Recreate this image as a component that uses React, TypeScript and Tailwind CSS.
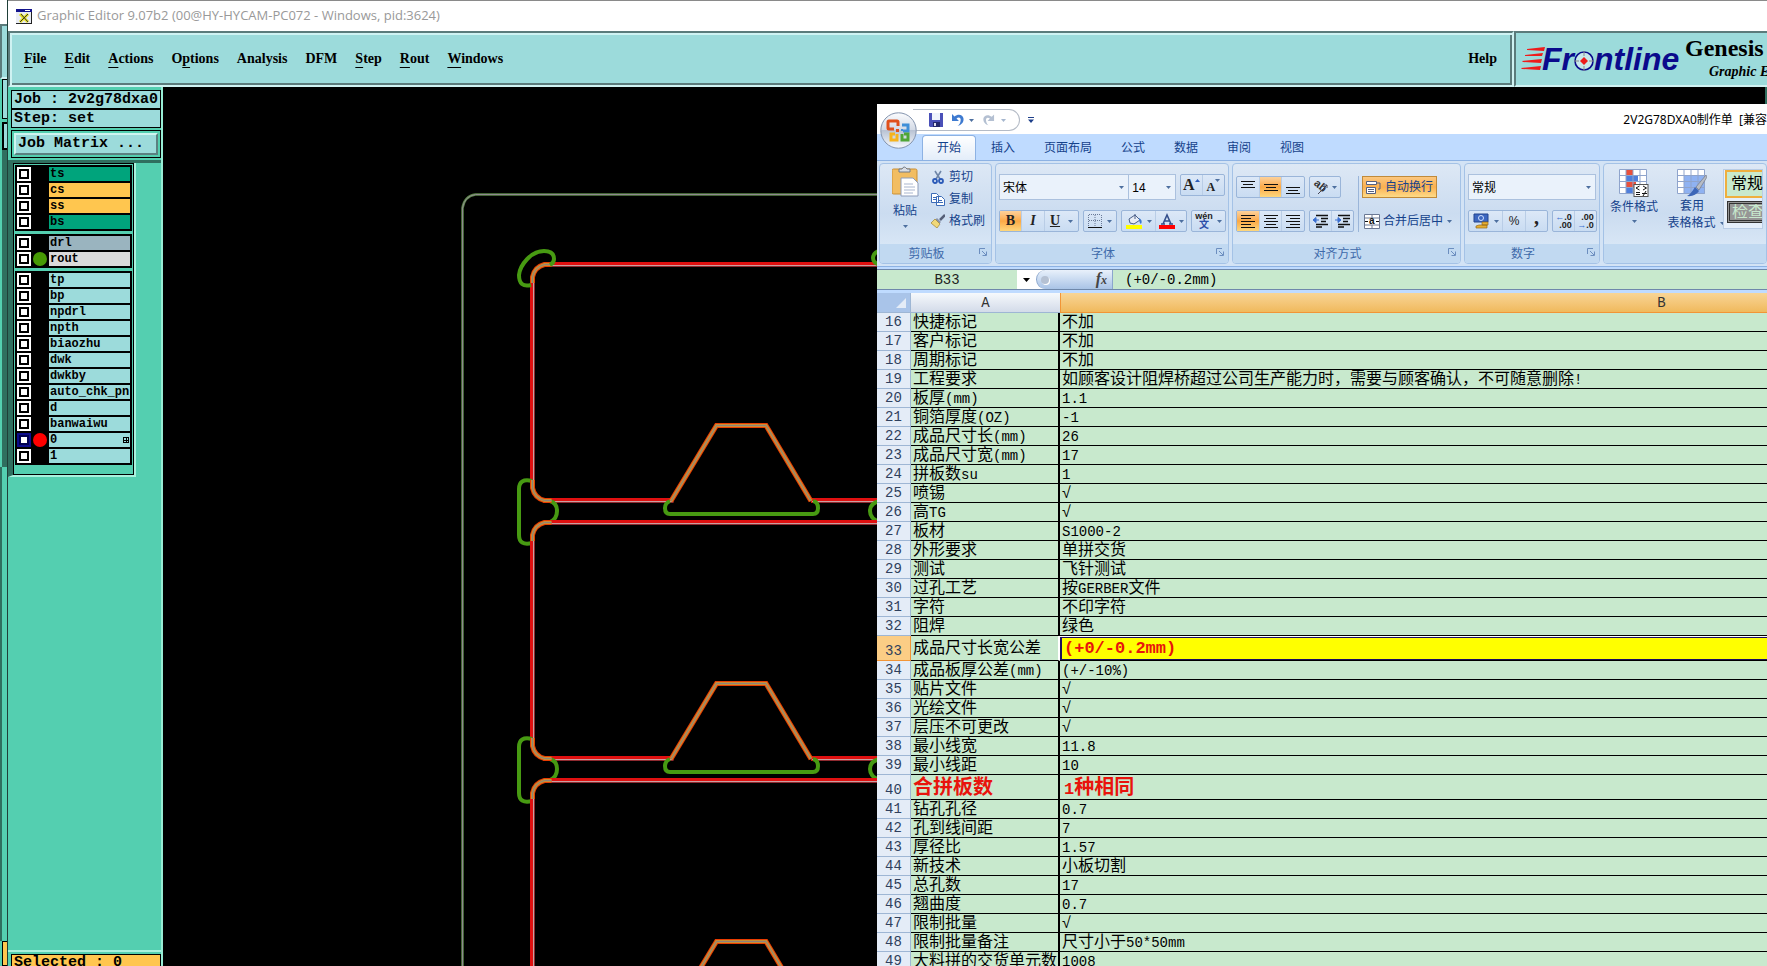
import type { ReactNode } from "react";
import clsx from "clsx";

const layerGroups = [
  [
    { name: "ts", bg: "bg-[#00a47c]" },
    { name: "cs", bg: "bg-[#ffc64f]" },
    { name: "ss", bg: "bg-[#ffc64f]" },
    { name: "bs", bg: "bg-[#00a47c]" },
  ],
  [
    { name: "drl", bg: "bg-[#9ab4bf]" },
    { name: "rout", bg: "bg-[#dadada]", dot: "bg-[#479a04]" },
  ],
  [
    { name: "tp", bg: "bg-[#9cdbdb]" },
    { name: "bp", bg: "bg-[#9cdbdb]" },
    { name: "npdrl", bg: "bg-[#9cdbdb]" },
    { name: "npth", bg: "bg-[#9cdbdb]" },
    { name: "biaozhu", bg: "bg-[#9cdbdb]" },
    { name: "dwk", bg: "bg-[#9cdbdb]" },
    { name: "dwkby", bg: "bg-[#9cdbdb]" },
    { name: "auto_chk_pnl", bg: "bg-[#9cdbdb]" },
    { name: "d", bg: "bg-[#9cdbdb]" },
    { name: "banwaiwu", bg: "bg-[#9cdbdb]" },
    { name: "0", bg: "bg-[#9cdbdb]", dot: "bg-[#ff0000]", active: true },
    { name: "1", bg: "bg-[#9cdbdb]" },
  ],
];

// label, index of the underlined letter (-1 for none)
const menus: [string, number][] = [
  ["File", 0],
  ["Edit", 0],
  ["Actions", 0],
  ["Options", 1],
  ["Analysis", -1],
  ["DFM", -1],
  ["Step", 0],
  ["Rout", 0],
  ["Windows", 0],
];

const rows: [number, string, string][] = [
  [16, "快捷标记", "不加"],
  [17, "客户标记", "不加"],
  [18, "周期标记", "不加"],
  [19, "工程要求", "如顾客设计阻焊桥超过公司生产能力时，需要与顾客确认，不可随意删除!"],
  [20, "板厚(mm)", "1.1"],
  [21, "铜箔厚度(OZ)", "-1"],
  [22, "成品尺寸长(mm)", "26"],
  [23, "成品尺寸宽(mm)", "17"],
  [24, "拼板数su", "1"],
  [25, "喷锡", "√"],
  [26, "高TG", "√"],
  [27, "板材", "S1000-2"],
  [28, "外形要求", "单拼交货"],
  [29, "测试", "飞针测试"],
  [30, "过孔工艺", "按GERBER文件"],
  [31, "字符", "不印字符"],
  [32, "阻焊", "绿色"],
  [33, "成品尺寸长宽公差", "(+0/-0.2mm)"],
  [34, "成品板厚公差(mm)", "(+/-10%)"],
  [35, "贴片文件", "√"],
  [36, "光绘文件", "√"],
  [37, "层压不可更改", "√"],
  [38, "最小线宽", "11.8"],
  [39, "最小线距", "10"],
  [40, "合拼板数", "1种相同"],
  [41, "钻孔孔径", "0.7"],
  [42, "孔到线间距", "7"],
  [43, "厚径比", "1.57"],
  [44, "新技术", "小板切割"],
  [45, "总孔数", "17"],
  [46, "翘曲度", "0.7"],
  [47, "限制批量", "√"],
  [48, "限制批量备注", "尺寸小于50*50mm"],
  [49, "大料拼的交货单元数", "1008"],
];

const tabs = ["开始", "插入", "页面布局", "公式", "数据", "审阅", "视图"];

/* ---------- Genesis window ---------- */

const TitleBar = () => (
  <header className="flex h-[31px] shrink-0 items-center border-t border-[#8a8a8a] bg-white pl-2 font-['Open_Sans',sans-serif] text-[13px] text-[#999]">
    <svg className="mr-[5px]" width="16" height="15" viewBox="0 0 16 15">
      <rect x="0" y="0" width="16" height="15" fill="#222" />
      <rect x="0" y="0" width="15" height="14" fill="#e9ecf4" />
      <rect x="0" y="0" width="16" height="3" fill="#14148c" />
      <rect x="9" y="1" width="5" height="1" fill="#fff" />
      <path d="M4 5l8 8M12 5l-8 8" stroke="#e8e020" strokeWidth="3" />
      <path d="M5 5l7 8M12 5l-8 8" stroke="#333" strokeWidth="1" />
    </svg>
    Graphic Editor 9.07b2 (00@HY-HYCAM-PC072 - Windows, pid:3624)
  </header>
);

const MenuLabel = ({ text, at }: { text: string; at: number }) => (
  <button className="leading-5">
    {at < 0 ? (
      text
    ) : (
      <>
        {text.slice(0, at)}
        <span className="underline decoration-1 underline-offset-4 [text-decoration-skip-ink:none]">{text[at]}</span>
        {text.slice(at + 1)}
      </>
    )}
  </button>
);

const FrontlineLogo = () => (
  <svg className="shrink-0" width="164" height="40" viewBox="0 0 164 40">
    <g fill="#ee1c1c">
      <path d="M6 9l18-2-1 4-17-1z" />
      <path d="M4 15l18-2-1 3-17 0z" />
      <path d="M1 21l20-2-1 4-18-1z" />
      <path d="M0 28l20-2-1 4-18-1z" />
    </g>
    <g fill="#0a0a8c" fontFamily="'Liberation Sans', sans-serif" fontWeight="bold" fontStyle="italic" fontSize="32">
      <text x="21" y="30">Fr</text>
      <text x="73" y="30">ntline</text>
    </g>
    <circle cx="63" cy="21" r="9" fill="#c8e8ea" stroke="#0a0a8c" strokeWidth="1.6" />
    <path d="M63 17l4 4-4 4-4-4z" fill="#ee1c1c" />
    <path d="M63 11v5M63 26v5M53 21h5M68 21h5" stroke="#888" strokeWidth="1" />
  </svg>
);

const MenuBar = () => (
  <div className="flex h-14 shrink-0 bg-[#9cdbdb] font-['Liberation_Serif',serif] text-sm font-bold text-black">
    <nav className="flex min-w-0 flex-1 items-center gap-[18px] border-2 border-t-[#5b7b7b] border-r-[#cff2f2] border-b-[#cff2f2] border-l-[#5b7b7b] pr-[15px] pl-[14px] shadow-[inset_2px_2px_0_#cff2f2,inset_-2px_-2px_0_#5b7b7b]">
      {menus.map(([text, at]) => (
        <MenuLabel key={text} text={text} at={at} />
      ))}
      <button className="ml-auto">Help</button>
    </nav>
    <div className="flex w-[253px] shrink-0 overflow-hidden border-2 border-r-0 border-t-[#5b7b7b] border-b-[#cff2f2] border-l-[#5b7b7b] pl-[5px]">
      <div className="pt-[7px]">
        <FrontlineLogo />
      </div>
      <div className="flex flex-col pt-px whitespace-nowrap">
        <span className="text-2xl leading-7">Genesis</span>
        <span className="pl-6 text-sm leading-5 italic">Graphic Editor</span>
      </div>
    </div>
  </div>
);

const Sidebar = () => (
  <aside className="flex w-[155px] shrink-0 flex-col border-r-2 border-[#97ecd4] bg-[#54cfb0] font-['Liberation_Mono',monospace] font-bold text-black">
    <div className="mt-[3px] ml-[3px] border border-black bg-[#9cdbdb] text-[15px]">
      <p className="h-[19px] overflow-hidden border-b-2 border-black pl-[2px] leading-[18px] whitespace-nowrap">Job : 2v2g78dxa0</p>
      <p className="h-[17px] pl-[2px] leading-[18px]">Step: set</p>
    </div>
    <div className="mt-[2px] ml-[3px] border border-black p-[2px]">
      <button className="block h-[22px] w-full border-2 border-t-[#cff5f0] border-r-[#5b8080] border-b-[#5b8080] border-l-[#cff5f0] bg-[#9cdbdb] pl-[2px] text-left text-[15px] leading-[18px]">
        Job Matrix ...
      </button>
    </div>
    <div className="mt-[2px] h-[3px] bg-[#2f6f5f]" />
    <div className="mr-auto border-r-2 border-b-2 border-l-[5px] border-r-[#a8f2dd] border-b-[#a8f2dd] border-l-[#2f6f5f]">
      <div className="flex flex-col gap-[3px] border border-black p-px pb-[9px]">
        {layerGroups.map((group, i) => (
          <ul key={i} className="border-2 border-y border-black bg-black">
            {group.map((layer) => (
              <li key={layer.name} className="flex h-4 items-center">
                <input
                  type="checkbox"
                  id={"layer-" + layer.name}
                  className={clsx(
                    "size-3.5 shrink-0 appearance-none border-2 bg-white",
                    "active" in layer
                      ? "border-[#0c0c8c] shadow-[inset_0_0_0_2px_#000050]"
                      : "border-white shadow-[inset_0_0_0_2px_black]"
                  )}
                />
                <span className="flex w-[18px] justify-center">
                  {"dot" in layer && <i className={clsx("size-3.5 rounded-full", layer.dot)} />}
                </span>
                <label
                  htmlFor={"layer-" + layer.name}
                  className={clsx("flex h-3.5 w-[81px] items-center justify-between overflow-hidden pl-px text-xs leading-[14px]", layer.bg)}
                >
                  {layer.name}
                  {"active" in layer && (
                    <svg className="mr-px" width="6" height="6" viewBox="0 0 6 6" shapeRendering="crispEdges">
                      <path d="M.5.5h5v5h-5zM3 0v6M0 3h6" fill="none" stroke="#000" />
                    </svg>
                  )}
                </label>
              </li>
            ))}
          </ul>
        ))}
      </div>
    </div>
    <div className="mt-auto h-4 shrink-0 overflow-hidden border-t-2 border-[#a8f2dd] pt-[2px] pl-[3px]">
      <p className="h-5 border border-black bg-[#ffc64f] pl-[2px] text-[15px] leading-4">Selected : 0</p>
    </div>
  </aside>
);

const Track = ({ d }: { d: string }) => (
  <>
    <path d={d} stroke="#e01010" strokeWidth="5" />
    <path d={d} stroke="#8f2a30" strokeWidth="2" transform="translate(1.5 1.5)" />
    <path d={d} stroke="#c9a0a0" strokeWidth="1" transform="translate(1 1)" />
  </>
);

const Bend = ({ d }: { d: string }) => (
  <>
    <path d={d} stroke="#e83c00" strokeWidth="5" />
    <path d={d} stroke="#c99035" strokeWidth="3" />
    <path d={d} stroke="#8c8080" strokeWidth="1" />
  </>
);

const Canvas = () => (
  <svg className="size-full" fill="none">
    <g transform="translate(-163 -87)">
      <path d="M462.5 1000V208q2-12 13-13.500H1000" stroke="#5b8748" strokeWidth="2.500" />
      <path d="M462.5 1000V208q2-12 13-13.500H1000" stroke="#8f8a90" strokeWidth="1" />
      {[0, 258, 516].map((y) => (
        <g key={y} transform={`translate(0 ${y})`}>
          <Track d="M545 264.500H900" />
          <Track d="M532.500 278V488" />
          <Track d="M543 500.500H672" />
          <Track d="M811 500.500H900" />
          <g stroke="#479a12" strokeWidth="4">
            <path d="M670 501q-5 2-5 7 0 6 5 6H813q5 0 5-6 0-6-5-7" />
            <path d="M532 481q-13-3-13 8v46q0 11 13 8" />
            <path d="M550 501q7 2 7 10t-7 11" />
            <path d="M880 501q-10 2-10 10t10 11" />
          </g>
          <Bend d="M671 501L716.500 425.500H766L811 501" />
          <Bend d="M532.500 480v8q2 10 12 12.500h7" />
          <Bend d="M532.500 283v-6q2-10 12-12.500h7" />
        </g>
      ))}
      <path d="M531 285q-12 3-12-10c1-10 12-24 25-24q10 0 10 8 0 4-4 6" stroke="#479a12" strokeWidth="4" />
      <path d="M882 250q-9 2-9 8t9 7" stroke="#479a12" strokeWidth="4" />
    </g>
  </svg>
);

/* ---------- Excel window ---------- */

const Arrow = ({ className }: { className?: string }) => (
  <svg className={clsx("shrink-0", className)} width="5" height="3" viewBox="0 0 5 3">
    <path d="M0 0h5L2.500 3z" fill="#4d6f9f" />
  </svg>
);

const Group = ({ children, className }: { children: ReactNode; className?: string }) => (
  <div className={clsx("flex h-[22px] shrink-0 divide-x divide-[#b9cde6] rounded-xs border border-[#9ab5d9] bg-linear-to-b from-[#dce8f7] to-[#c9dcf2]", className)}>
    {children}
  </div>
);

const Tool = ({ children, className, label, on }: { children: ReactNode; className: string; label: string; on?: boolean }) => (
  <button
    aria-label={label}
    className={clsx("flex h-full items-center justify-center gap-1", className, on && "bg-linear-to-b from-[#fcd19a] via-[#fba945] to-[#fdd77c]")}
  >
    {children}
  </button>
);

const Panel = ({ title, children, className, launcher = true }: { title: string; children: ReactNode; className?: string; launcher?: boolean }) => (
  <section className={clsx("flex h-[101px] flex-col overflow-hidden rounded-sm border border-[#a4c2e6] bg-linear-to-b from-[#dde8f5] via-[#cbdcf0] to-[#dfecf9]", className)}>
    <div className="min-h-0 flex-1 px-[3px] pt-[2px]">{children}</div>
    <div className="flex h-[19px] shrink-0 items-center bg-[#c1d9f1] pr-1">
      <h2 className="flex-1 pr-[6px] text-center text-xs text-[#3e6aaa]">{title}</h2>
      {launcher && (
        <svg width="8" height="8" viewBox="0 0 8 8" className="mb-1" fill="none" stroke="#6c8ebf">
          <path d="M.5 6V.5H6M3 3l4 4M7.500 3.500v4h-4" />
        </svg>
      )}
    </div>
  </section>
);

const Combo = ({ value, label, className }: { value: string; label: string; className: string }) => (
  <div className={clsx("relative h-[26px] border border-[#abc1de] bg-[#eaf2fb]", className)}>
    <select aria-label={label} className="h-full w-full appearance-none bg-transparent pl-[3px] text-xs text-black">
      <option>{value}</option>
    </select>
    <Arrow className="pointer-events-none absolute top-[11px] right-1" />
  </div>
);

const Lines = ({ xs, y = 0 }: { xs: [number, number][]; y?: number }) => (
  <svg width="14" height="18" viewBox="0 0 14 18" shapeRendering="crispEdges">
    {xs.map(([a, b], i) => (
      <rect key={i} x={a} y={y + i * 3} width={b - a} height="1" fill="#111" />
    ))}
  </svg>
);

const Indent = ({ flip }: { flip?: boolean }) => (
  <svg width="16" height="14" viewBox="0 0 16 14">
    <path d="M3 1.500h12M8 4.500h7M8 7.500h5M3 10.500h12M3 13h6" stroke="#111" strokeWidth="1.300" />
    <path d={flip ? "M0 6h3M3 3.500L6 6 3 8.500z" : "M3 6h3M3 3.500L0 6l3 2.500z"} stroke="#3a6fd0" fill="#3a6fd0" />
  </svg>
);

const OfficeButton = () => (
  <button aria-label="Office" className="absolute top-1 left-[3px]">
    <svg width="38" height="44" viewBox="0 0 38 44">
      <defs>
        <linearGradient id="orb" x1="0" y1="0" x2="0" y2="1">
          <stop offset="0" stopColor="#fbfcfe" />
          <stop offset=".48" stopColor="#d3dae6" />
          <stop offset=".5" stopColor="#b9c3d4" />
          <stop offset="1" stopColor="#f6f9fd" />
        </linearGradient>
      </defs>
      <circle cx="18.500" cy="22.500" r="17.700" fill="url(#orb)" stroke="#8494ae" />
      <g fill="none" strokeWidth="3">
        <path d="M14 21H9q-1 0-1-1v-6q0-1 1-1h8q1 0 1 1v4" stroke="#e0501c" />
        <path d="M22 17h6v6h-5" stroke="#3f8fd8" />
        <path d="M17 26v6h-6v-6h4" stroke="#f6b31c" />
        <path d="M22 26v6h6v-6h-4" stroke="#4fa636" />
      </g>
      <path d="M16 21h3v3h-3z" fill="#e0501c" />
      <path d="M21 21h2v2h-2z" fill="#3f8fd8" />
    </svg>
  </button>
);

const ExcelTitle = () => (
  <div className="flex h-[30px] shrink-0 items-center bg-white pt-[2px] pl-9">
    <div className="flex h-[22px] w-[107px] items-center rounded-r-full border border-l-0 border-[#b4bbc6] pl-4">
      <button aria-label="保存">
        <svg width="14" height="14" viewBox="0 0 14 14">
          <path d="M0 0h14v14H1l-1-1z" fill="#4a50b8" />
          <path d="M3 0h8v7H3z" fill="#eef3fb" />
          <path d="M4 9h7v5H4z" fill="#25286c" />
          <path d="M5 10h2v3H5z" fill="#dde" />
        </svg>
      </button>
      <button aria-label="撤销" className="ml-2 flex items-center gap-1">
        <svg width="14" height="14" viewBox="0 0 14 14">
          <path d="M1 1v7h7L5.500 5.500C8 3.500 10.500 5 9.500 8.500 9 10.500 8 12 6.500 13c4-1 6.500-4 6-7.500C12 1.500 7 .5 3.500 3.500z" fill="#3e7ad0" />
        </svg>
        <Arrow />
      </button>
      <button aria-label="恢复" className="ml-2 flex items-center gap-[6px]">
        <svg width="13" height="14" viewBox="0 0 14 14">
          <path d="M13 1v7H6l2.500-2.500C6 3.500 3.500 5 4.500 8.500 5 10.500 6 12 7.500 13c-4-1-6.500-4-6-7.500C2 1.500 7 .5 10.500 3.500z" fill="#b4c0d2" />
        </svg>
        <Arrow className="opacity-50" />
      </button>
    </div>
    <button aria-label="自定义快速访问工具栏" className="ml-2">
      <svg width="6" height="6" viewBox="0 0 6 6">
        <path d="M0 0h6v1H0zM0 2.500h6L3 6z" fill="#1e3f8a" />
      </svg>
    </button>
    <h1 className="ml-auto shrink-0 pr-0 font-['Noto_Sans','Noto_Sans_CJK_SC',sans-serif] text-xs whitespace-pre text-black">2V2G78DXA0制作单  [兼容</h1>
  </div>
);

const ClipboardPanel = () => (
  <Panel title="剪贴板" className="w-[113px] shrink-0">
    <div className="flex gap-2 text-[#15428b]">
      <button className="flex w-10 flex-col items-center pl-1">
        <svg width="27" height="31" viewBox="0 0 27 31">
          <rect x="0" y="3" width="25" height="25" rx="1.500" fill="#f2bd62" stroke="#c98f34" />
          <path d="M7 3h3q2-4 5 0h3v3H7z" fill="#d9dde4" stroke="#6f7886" />
          <path d="M9 12h12l5 5v13H9z" fill="#fff" stroke="#8d9cba" />
          <path d="M12 18h9M12 21h11M12 24h11M12 27h9" stroke="#a9b6cf" />
        </svg>
        <span className="mt-1 text-xs leading-5">粘贴</span>
        <Arrow className="mt-1" />
      </button>
      <div className="flex flex-col text-xs">
        <button className="flex h-[22px] items-center gap-1">
          <svg width="14" height="14" viewBox="0 0 14 14" fill="none">
            <path d="M4 1l5 8M10 1L5 9" stroke="#6f86a8" strokeWidth="1.600" />
            <circle cx="4" cy="11" r="2" stroke="#2c5bb8" strokeWidth="1.800" />
            <circle cx="10" cy="11" r="2" stroke="#2c5bb8" strokeWidth="1.800" />
          </svg>
          剪切
        </button>
        <button className="flex h-[22px] items-center gap-1">
          <svg width="14" height="14" viewBox="0 0 14 14">
            <path d="M.5 1.500h5l2 2v7h-7zM5.500 4.500h5l3 3v6h-8z" fill="#fff" stroke="#3c6cb8" />
            <path d="M7 8.500h4M7 10.500h5M2 5.500h3M2 7.500h3" stroke="#3c6cb8" />
          </svg>
          复制
        </button>
        <button className="flex h-[22px] items-center gap-1">
          <svg width="14" height="14" viewBox="0 0 14 14">
            <path d="M14 1l-5 5" stroke="#555f78" strokeWidth="2.500" />
            <path d="M6 4l4 4-2 2-4-4z" fill="#8a93a8" />
            <path d="M4 5l5 5-3 4-6-5z" fill="#f0d878" stroke="#a08430" strokeWidth=".7" />
          </svg>
          格式刷
        </button>
      </div>
    </div>
  </Panel>
);

const FontPanel = () => (
  <Panel title="字体" className="w-[234px] shrink-0">
    <div className="flex items-start pt-2">
      <Combo label="字体" value="宋体" className="w-[131px]" />
      <Combo label="字号" value="14" className="w-[47px] border-l-0" />
      <Group className="ml-1 w-[45px]">
        <Tool label="增大字号" className="w-1/2 items-start font-['Liberation_Serif',serif] text-base leading-5 font-bold text-[#222]">
          <span className="-mr-1">A</span>
          <svg className="mt-1" width="5" height="3" viewBox="0 0 5 3"><path d="M0 3h5L2.500 0z" fill="#2c5bb8" /></svg>
        </Tool>
        <Tool label="减小字号" className="w-1/2 items-start font-['Liberation_Serif',serif] text-xs leading-6 font-bold text-[#222]">
          <span className="-mr-1">A</span>
          <Arrow className="mt-1" />
        </Tool>
      </Group>
    </div>
    <div className="mt-[10px] flex gap-1 font-['Liberation_Serif',serif] text-sm text-[#222]">
      <Group className="w-20">
        <Tool label="加粗" className="w-[22px] font-bold" on>B</Tool>
        <Tool label="倾斜" className="w-[23px] font-bold italic">I</Tool>
        <Tool label="下划线" className="flex-1 font-bold"><span className="underline">U</span><Arrow className="ml-1" /></Tool>
      </Group>
      <Group className="w-[34px]">
        <Tool label="边框" className="flex-1">
          <svg width="14" height="14" viewBox="0 0 14 14" fill="none">
            <path d="M.5 1v11M7 1v11M13.500 1v11M1 .5h12M1 6.500h12" stroke="#6a7a98" strokeDasharray="1 1" />
            <path d="M0 13.500h14" stroke="#111" />
          </svg>
          <Arrow className="ml-px" />
        </Tool>
      </Group>
      <Group className="w-[66px]">
        <Tool label="填充颜色" className="w-[34px]">
          <svg width="17" height="16" viewBox="0 0 17 16">
            <path d="M3 6l6-4 5 5-6 4-4-1z" fill="#e8edf6" stroke="#4a5f88" />
            <path d="M9 1v5" stroke="#4a5f88" />
            <path d="M13 5q4 2 2 6-2-1-2-6z" fill="#3a78d0" />
            <path d="M0 12h16v4H0z" fill="#ffff00" />
          </svg>
          <Arrow />
        </Tool>
        <Tool label="字体颜色" className="flex-1">
          <svg width="16" height="16" viewBox="0 0 16 16">
            <path d="M2 11h4M10 11h4M4 11l4-9 4 9M5.500 8h5" stroke="#35508c" strokeWidth="1.600" fill="none" />
            <path d="M0 12h16v4H0z" fill="#ff0000" />
          </svg>
          <Arrow />
        </Tool>
      </Group>
      <Group className="w-[35px]">
        <Tool label="拼音" className="flex-1">
          <span className="flex flex-col items-center font-['Liberation_Sans','Noto_Sans_CJK_SC',sans-serif] text-[9px] leading-[8px] font-bold">
            wén<span className="text-[10px] leading-[10px] text-[#2c4fa8]">文</span>
          </span>
          <Arrow />
        </Tool>
      </Group>
    </div>
  </Panel>
);

const AlignPanel = () => (
  <Panel title="对齐方式" className="w-[229px] shrink-0">
    <div className="flex pt-[10px]">
      <div className="flex flex-col gap-3">
        <div className="flex gap-1">
          <Group className="w-[69px]">
            <Tool label="顶端对齐" className="flex-1"><Lines y={3} xs={[[0, 14], [2, 12], [0, 14]]} /></Tool>
            <Tool label="垂直居中" className="flex-1" on><Lines y={6} xs={[[0, 14], [2, 12], [0, 14]]} /></Tool>
            <Tool label="底端对齐" className="flex-1"><Lines y={9} xs={[[0, 14], [2, 12], [0, 14]]} /></Tool>
          </Group>
          <Group className="w-8">
            <Tool label="方向" className="flex-1">
              <svg width="17" height="18" viewBox="0 0 17 18">
                <text x="0" y="9" fontSize="11" fontWeight="bold" fill="#333" transform="rotate(40 4 8)">ab</text>
                <path d="M5 16l9-9M11 7h3v3" stroke="#445" fill="none" />
              </svg>
              <Arrow className="-ml-[2px]" />
            </Tool>
          </Group>
        </div>
        <div className="flex gap-1">
          <Group className="w-[69px]">
            <Tool label="文本左对齐" className="flex-1" on><Lines y={3} xs={[[0, 14], [0, 10], [0, 14], [0, 10], [0, 14]]} /></Tool>
            <Tool label="居中" className="flex-1"><Lines y={3} xs={[[0, 14], [2, 12], [0, 14], [2, 12], [0, 14]]} /></Tool>
            <Tool label="文本右对齐" className="flex-1"><Lines y={3} xs={[[0, 14], [4, 14], [0, 14], [4, 14], [0, 14]]} /></Tool>
          </Group>
          <Group className="w-[45px]">
            <Tool label="减少缩进量" className="flex-1"><Indent /></Tool>
            <Tool label="增加缩进量" className="flex-1"><Indent flip /></Tool>
          </Group>
        </div>
      </div>
      <div className="mr-[3px] ml-1 border-l border-[#9ab5d9]" />
      <div className="flex flex-col gap-3 text-xs whitespace-nowrap text-[#15428b]">
        <button className="flex h-[22px] w-[75px] items-center gap-[3px] border border-[#c08a3a] bg-linear-to-b from-[#fbc77f] via-[#fbb04f] to-[#fddb88] pl-[2px]">
          <svg width="17" height="15" viewBox="0 0 17 15" fill="#fff" stroke="#556080">
            <path d="M1.500 1.500h10v3h-10zM1.500 7.500h9v6h-9zM3 9.500h6M3 11.500h6" />
            <path d="M12 3h3v6h-2" fill="none" />
          </svg>
          自动换行
        </button>
        <button className="flex h-[22px] items-center gap-[3px] pl-[2px]">
          <svg width="16" height="15" viewBox="0 0 16 15" fill="#fff" stroke="#6a7894">
            <path d="M.5.500h15v14H.5zM8 0v4M8 11v4M0 4h16M0 11h16" />
            <path d="M1 7.500h3M12 7.500h3" stroke="#111" />
            <text x="5" y="10" fontSize="10" fontWeight="bold" fill="#111" stroke="none">a</text>
          </svg>
          合并后居中
          <Arrow className="ml-px" />
        </button>
      </div>
    </div>
  </Panel>
);

const NumberPanel = () => (
  <Panel title="数字" className="w-[136px] shrink-0">
    <div className="pt-2">
      <Combo label="数字格式" value="常规" className="w-32" />
    </div>
    <div className="mt-[10px] flex gap-1 text-xs text-[#222]">
      <Group className="w-20">
        <Tool label="会计数字格式" className="w-[34px]">
          <svg width="17" height="16" viewBox="0 0 17 16">
            <path d="M1 1h14v8H1z" fill="#3d67c0" stroke="#23458e" />
            <circle cx="8" cy="5" r="2.500" fill="none" stroke="#cfe0ff" />
            <path d="M9 9h6v3H9zM6 12h8v3H3v-2z" fill="#e8b030" stroke="#94691c" strokeWidth=".7" />
          </svg>
          <Arrow />
        </Tool>
        <Tool label="百分比样式" className="w-[23px]">%</Tool>
        <Tool label="千位分隔样式" className="flex-1 font-['Liberation_Serif',serif] text-xl leading-4 font-bold"><span className="-mt-2">,</span></Tool>
      </Group>
      <Group className="w-[45px]">
        <Tool label="增加小数位数" className="flex-1">
          <span className="flex flex-col items-end font-['Liberation_Sans',sans-serif] text-[9px] leading-[8px] font-bold">
            <span><b className="text-[#3a6fd0]">←</b>.0</span>.00
          </span>
        </Tool>
        <Tool label="减少小数位数" className="flex-1">
          <span className="flex flex-col items-end font-['Liberation_Sans',sans-serif] text-[9px] leading-[8px] font-bold">
            .00<span><b className="text-[#3a6fd0]">→</b>.0</span>
          </span>
        </Tool>
      </Group>
    </div>
  </Panel>
);

const Grid = ({ children }: { children?: ReactNode }) => (
  <svg width="30" height="29" viewBox="0 0 30 29">
    <rect x=".5" y=".5" width="27" height="24" fill="#fff" />
    {children}
  </svg>
);

const StylesPanel = () => (
  <Panel title="" launcher={false} className="min-w-0 flex-1">
    <div className="flex pt-[3px] text-xs whitespace-nowrap text-[#15428b]">
      <button className="flex w-[54px] shrink-0 flex-col items-center">
        <Grid>
          <path d="M7 0h7v6H7zM7 12h10v6H7z" fill="#e8503c" />
          <path d="M7 6h12v6H7zM7 18h7v7H7z" fill="#4f7fdc" />
          <path d="M.5.500h27v24H.5zM7 0v25M14 0v25M21 0v25M0 6.500h28M0 12.500h28M0 18.500h28" fill="none" stroke="#8fa4cc" />
          <rect x="15" y="15.500" width="14" height="12" fill="#fff" stroke="#555" />
          <path d="M20.500 17L17 19l3.500 2M17 23.500h4M17 25.500h4M24 17l3.500 2-3.500 2M23 24.500h5M27 22l-3 5" fill="none" stroke="#111" />
        </Grid>
        <span className="leading-[18px]">条件格式</span>
        <Arrow className="mt-1" />
      </button>
      <button className="flex w-[62px] shrink-0 flex-col items-center">
        <Grid>
          <path d="M7 6h21v19H7z" fill="#8fb2f2" />
          <path d="M.5.500h27v24H.5zM7 0v25M14 0v25M21 0v25M0 6.500h28M0 12.500h28M0 18.500h28" fill="none" stroke="#8fa4cc" />
          <path d="M29 6L19 18l3 3 8-13z" fill="#b8bcc4" stroke="#6a6f7a" strokeWidth=".6" />
          <path d="M18 18l4 4q-4 6-12 5 4-2 8-9z" fill="#3c66b8" />
        </Grid>
        <span className="leading-[17px]">套用</span>
        <span className="flex items-center gap-1 pl-2 leading-[17px]">表格格式<Arrow /></span>
      </button>
      <div className="h-[60px] min-w-0 flex-1 border border-[#b9cde6] bg-[#e6effa] pl-px text-base">
        <div className="h-7 border-2 border-r-0 border-[#efaf3e] bg-[#c8e9cd] pl-1 leading-6 text-black">常规</div>
        <div className="mt-[3px] ml-[2px] h-[22px] overflow-hidden border-[3px] border-double border-r-0 border-[#333] bg-[#969696] pl-[2px] leading-4 text-[#c8e9cd]">检查单元格</div>
      </div>
    </div>
  </Panel>
);

const FormulaBar = () => (
  <div className="mt-[2px] flex h-[21px] shrink-0 border-y border-[#6f88ab] bg-[#c8e9cd]">
    <input aria-label="名称框" defaultValue="B33" className="w-[140px] text-center font-['Liberation_Mono',monospace] text-sm text-[#222]" />
    <button aria-label="名称" className="flex w-[19px] items-center justify-center bg-white">
      <svg width="7" height="4" viewBox="0 0 7 4"><path d="M0 0h7L3.500 4z" /></svg>
    </button>
    <div className="flex w-[77px] items-center justify-between border-r border-[#8ba6cd] bg-white">
      <div className="flex h-full flex-1 items-center justify-between rounded-l-full border-l border-[#8ba6cd] bg-linear-to-b from-[#e9f1fb] to-[#a9c3e6] pr-[5px] pl-1">
        <i className="size-2 rounded-full bg-[#b5c1d3] shadow-[1px_1px_0_#fff]" />
        <button aria-label="插入函数" className="font-['Liberation_Serif',serif] text-base leading-4 font-bold text-[#444] italic">
          f<span className="text-xs">x</span>
        </button>
      </div>
    </div>
    <input aria-label="编辑栏" defaultValue="(+0/-0.2mm)" className="min-w-0 flex-1 pl-3 font-['Liberation_Mono',monospace] text-sm text-black" />
  </div>
);

// Half-width runs are set in a narrower face than the Chinese ones.
const Mixed = ({ text, className = "text-sm" }: { text: string; className?: string }) => (
  <>
    {text.split(/([\x20-\x7e]+)/).map((run, i) =>
      i % 2 ? (
        <span key={i} className={clsx("font-['Liberation_Mono',monospace] leading-none", className)}>{run}</span>
      ) : (
        run
      )
    )}
  </>
);

const Sheet = () => (
  <div className="mt-[3px] min-h-0 flex-1 overflow-hidden bg-[#c8e9cd]">
    <table className="w-[1385px] table-fixed border-separate border-spacing-0 text-base text-black">
      <colgroup>
        <col className="w-[34px]" />
        <col className="w-[149px]" />
        <col className="w-[1202px]" />
      </colgroup>
      <thead>
        <tr className="h-5 font-['Liberation_Mono',monospace] text-sm leading-[18px] text-[#333]">
          <td className="border-r border-b border-[#9eb6d4] bg-[#a9c4e9] p-0">
            <svg className="mr-1 ml-auto" width="10" height="10" viewBox="0 0 10 10"><path d="M10 0v10H0z" fill="#e4ecf7" /></svg>
          </td>
          <th className="border-b border-[#9eb6d4] bg-linear-to-b from-[#f6f9fc] to-[#d3dbe9] p-0 font-normal">A</th>
          <th className="border-b border-l border-[#f29536] bg-linear-to-b from-[#f8d595] to-[#f0b95c] p-0 font-normal">B</th>
        </tr>
      </thead>
      <tbody>
        {rows.map(([n, a, b]) => {
          const active = n === 33;
          const red = n === 40;
          return (
            <tr key={n} className={clsx("leading-[18px] whitespace-nowrap", active || red ? "h-[25px]" : "h-[19px]")}>
              <th
                className={clsx(
                  "border-r border-b p-0 text-center align-bottom font-['Liberation_Mono',monospace] text-sm leading-[18px] font-normal text-[#2f3f5c]",
                  active ? "border-[#f29536] bg-[#fbcd85]" : "border-[#9eb6d4] bg-[#e4ecf7]"
                )}
              >
                {n}
              </th>
              <td className={clsx("border-r-2 border-b border-black p-0 pl-[2px]", active && "border-r-white", red && "pl-1 text-xl leading-6 font-bold text-[#e8140c]")}>
                <Mixed text={a} />
              </td>
              <td
                className={clsx(
                  "border-b border-black p-0",
                  active
                    ? "bg-[#ffff00] pl-1 font-bold text-[#e8140c] shadow-[inset_0_1px_0_#fff,inset_2px_2px_0_#1c1060,inset_0_-1px_0_#1c1060]"
                    : red
                      ? "pl-1 text-xl leading-6 font-bold text-[#e8140c]"
                      : "pl-[2px]"
                )}
              >
                <Mixed text={b} className={active || red ? "text-[17px]" : "text-sm"} />
              </td>
            </tr>
          );
        })}
      </tbody>
    </table>
  </div>
);

const ExcelWindow = () => (
  <div className="absolute top-[104px] right-0 bottom-0 left-[877px] flex flex-col overflow-hidden bg-[#bfdbff] font-['Liberation_Sans','Noto_Sans_CJK_SC',sans-serif]">
    <ExcelTitle />
    <OfficeButton />
    <nav className="flex h-[26px] shrink-0 items-end gap-px pl-[45px] text-xs text-[#15428b]">
      {tabs.map((tab, i) => (
        <button
          key={tab}
          className={clsx("h-[25px] px-[14px]", i === 0 && "rounded-t-sm border border-b-0 border-[#8db2e3] bg-linear-to-b from-white to-[#e3edf9] px-[13px]")}
        >
          {tab}
        </button>
      ))}
    </nav>
    <div className="flex shrink-0 gap-[3px] border-y border-[#8db2e3] bg-[#d3e3f5] py-[2px] pl-[2px]">
      <ClipboardPanel />
      <FontPanel />
      <AlignPanel />
      <NumberPanel />
      <StylesPanel />
    </div>
    <FormulaBar />
    <Sheet />
  </div>
);

// The sliver of the second Genesis window that shows behind this one.
const BackWindow = () => (
  <div className="flex w-2 shrink-0 flex-col overflow-hidden border-r border-[#1f3f38] bg-[#54cfb0]">
    <div className="h-6 shrink-0 bg-white" />
    <div className="h-[55px] shrink-0 border-2 border-r-0 border-t-[#5b7b7b] border-b-[#cff2f2] border-l-[#5b7b7b] bg-[#9cdbdb]" />
    <div className="ml-[2px] h-10 shrink-0 border border-r-0 border-black bg-[#9cdbdb]" />
    <div className="mt-[3px] ml-[2px] h-7 shrink-0 border-2 border-r-0 border-black bg-[#9cdbdb]" />
    <div className="h-[317px] shrink-0 border-l-2 border-[#54cfb0] bg-[#2f6f5f]" />
    <div className="flex-1 border-l-2 border-[#2f6f5f]" />
    <div className="ml-[2px] h-[25px] shrink-0 border border-r-0 border-black bg-[#ffc64f]" />
  </div>
);

const App = () => {
  return (
    <main className="relative flex h-screen w-full overflow-hidden bg-black">
      <BackWindow />
      <div className="flex min-w-0 flex-1 flex-col">
        <TitleBar />
        <MenuBar />
        <div className="flex min-h-0 flex-1">
          <Sidebar />
          <div className="min-w-0 flex-1 overflow-hidden border-r-2 border-[#2f6f5f] bg-black">
            <Canvas />
          </div>
        </div>
      </div>
      <ExcelWindow />
    </main>
  );
};

export default App;
